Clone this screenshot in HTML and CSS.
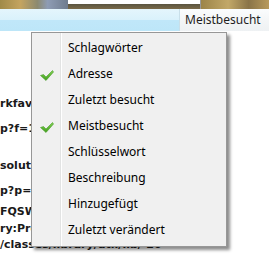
FILE: index.html
```html
<!DOCTYPE html>
<html lang="de">
<head>
    <meta charset="UTF-8">
    <title>Lesezeichen</title>
    <link rel="stylesheet" href="styles.css">
</head>
<body>
<div class="page">
    <div class="photo">
        <div class="land"></div>
        <div class="mid"></div>
        <div class="right"></div>
    </div>
    <div class="header">
        <div class="head-blue"></div>
        <div class="head-col">Meistbesucht</div>
    </div>
    <div class="content">
        <div class="line l1">rkfavoriten</div>
        <div class="line l2">p?f=12</div>
        <div class="line l3">solute</div>
        <div class="line l4">p?p=71</div>
        <div class="line l5">FQSW</div>
        <div class="line l6">ry:Projekte</div>
        <div class="line l7">/classes/library/util/lib/-20</div>
    </div>

    <ul class="menu">
        <li>Schlagwörter</li>
        <li class="checked">Adresse</li>
        <li>Zuletzt besucht</li>
        <li class="checked">Meistbesucht</li>
        <li>Schlüsselwort</li>
        <li>Beschreibung</li>
        <li>Hinzugefügt</li>
        <li>Zuletzt verändert</li>
    </ul>
</div>
</body>
</html>
```

FILE: styles.css
```css
body, ul, li {
    margin: 0;
    padding: 0;
    list-style: none;
}

body {
    background: #fff;
    font-family: "Noto Sans", "Liberation Sans", sans-serif;
}

.page {
    width: 269px;
    height: 257px;
    position: relative;
    overflow: hidden;
}

/* photo strip at the top */
.photo {
    height: 9px;
    display: flex;
}

.photo .land {
    width: 68px;
    background: linear-gradient(90deg, #a08a48 0%, #c4a460 30%, #8c8a70 55%, #8e9cb4 70%, #6f7c8e 100%);
}

.photo .mid {
    width: 132px;
    background: linear-gradient(180deg, #ffffff 0, #ffffff 4px, #5a5440 4px, #7a6a48 9px);
}

.photo .right {
    flex: 1;
    border-left: 1px solid #9a9a9a;
    background: linear-gradient(90deg, #9c8448, #c2a868 40%, #8a7448 70%, #b89a5c);
}

/* column header */
.header {
    height: 22px;
    display: flex;
}

.head-blue {
    flex: 1;
    background: linear-gradient(180deg, #e4f5fc 0%, #d9f1fb 50%, #c0e7f9 52%, #bde6f8 100%);
}

.head-col {
    width: 84px;
    padding-left: 5px;
    border-left: 1px solid #c9dfe9;
    background: linear-gradient(180deg, #fafcfd 0%, #f4f6f7 50%, #eef1f3 100%);
    font-size: 12px;
    line-height: 22px;
    color: #1e1e1e;
}

/* bookmark text behind the menu */
.content {
    font-family: "DejaVu Sans", Verdana, sans-serif;
    font-weight: bold;
    font-size: 11px;
    color: #1a1a1a;
    line-height: 13px;
    white-space: nowrap;
}

.l1 { margin-top: 66px; }
.l2 { margin-top: 12px; }
.l3 { margin-top: 24px; }
.l4 { margin-top: 12px; }
.l5 { margin-top: 8px; }
.l6 { margin-top: 4px; }
.l7 { margin-top: 3px; }

/* context menu */
.menu {
    position: absolute;
    left: 31px;
    top: 32px;
    width: 194px;
    padding: 2px 0 3px;
    border: 1px solid #979797;
    background: #f0f0f0;
    box-shadow: 3px 3px 3px rgba(0, 0, 0, 0.45);
    font-size: 12px;
    color: #000;
}

.menu::before {
    content: "";
    position: absolute;
    left: 28px;
    top: 0;
    bottom: 0;
    width: 1px;
    background: #e2e3e3;
    border-right: 1px solid #fff;
}

.menu li {
    height: 26px;
    line-height: 26px;
    padding-left: 36px;
    position: relative;
}

.menu li.checked::before {
    content: "";
    position: absolute;
    left: 8px;
    top: 9px;
    width: 14px;
    height: 11px;
    background: url("data:image/svg+xml,%3Csvg xmlns='http://www.w3.org/2000/svg' width='14' height='11'%3E%3ClinearGradient id='g' x1='0' y1='0' x2='0' y2='1'%3E%3Cstop offset='0' stop-color='%2385d452'/%3E%3Cstop offset='1' stop-color='%233f9e1c'/%3E%3C/linearGradient%3E%3Cpath d='M0.5 5.5 L3.5 4.5 L6 7 L12.5 0.5 L13.5 2 L6 10.5 Z' fill='url(%23g)' stroke='%23489a2a' stroke-width='0.6'/%3E%3C/svg%3E") no-repeat;
}
```
